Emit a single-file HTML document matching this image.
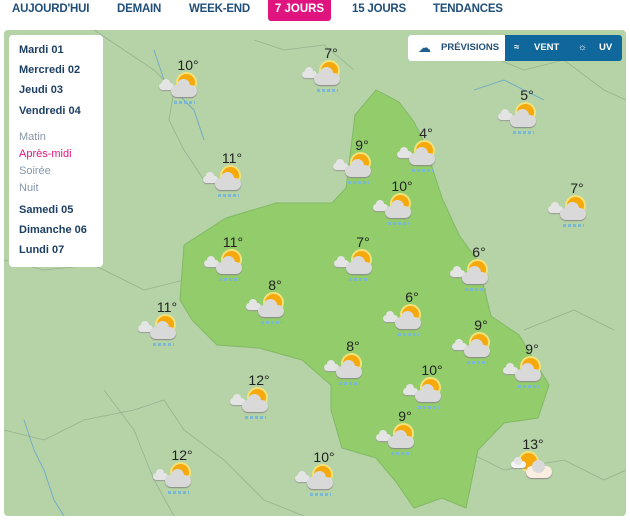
<!DOCTYPE html>
<html><head><meta charset="utf-8"><style>
*{margin:0;padding:0;box-sizing:border-box}
body{width:630px;height:520px;background:#fff;font-family:"Liberation Sans",sans-serif;position:relative;overflow:hidden}
.nav{position:absolute;top:3px;font-size:11.5px;font-weight:bold;color:#1f4e79;letter-spacing:-0.2px}
.act{position:absolute;left:268px;top:0;width:63px;height:21px;background:#e0147f;border-radius:0 0 3px 3px;color:#fff;font-size:11.5px;font-weight:bold;text-align:center;line-height:19px}
.map{position:absolute;left:4px;top:30px;width:622px;height:486px;background:#b5d3a6;border-radius:4px;overflow:hidden}
.menu{position:absolute;left:9px;top:35px;width:94px;height:232px;background:#fff;border-radius:4px}
.menu div{position:absolute;left:10px;font-size:11px;font-weight:bold;color:#1d3f63}
.menu .s{font-weight:normal;color:#8597aa}
.tog{position:absolute;left:408px;top:35px;width:214px;height:26px;border-radius:3px;overflow:hidden;background:#10679c}
.tog .w{position:absolute;left:0;top:0;width:97px;height:26px;background:#fff}
.tog span{position:absolute;top:7px;font-size:9.5px;font-weight:bold}
.i{position:absolute;width:0;height:0}
.i b{position:absolute;z-index:2;font-size:14px;font-weight:normal;color:#222;left:-15px;width:30px;text-align:center;top:-2px;line-height:14px}
.i .sun{position:absolute;left:-10px;top:14px;width:17px;height:17px;border-radius:50%;background:#f6a90d;box-shadow:0 0 0 2px #f3e27a}
.i .c{position:absolute;left:-17px;top:25px;width:26px;height:12px;border-radius:7px;background:#d9d9d9;box-shadow:0 1px 1px #888}
.i .c:before{content:"";position:absolute;left:6px;top:-6px;width:13px;height:13px;border-radius:50%;background:#d9d9d9}
.i .sc{position:absolute;left:-29px;top:23px;width:15px;height:7px;border-radius:4px;background:#e4e4e4;box-shadow:0 1px 1px #999}
.i .sc:before{content:"";position:absolute;left:3px;top:-4px;width:8px;height:8px;border-radius:50%;background:#e4e4e4}
.i .r{position:absolute;left:-14px;top:41px;width:21px;height:3px;background:repeating-linear-gradient(90deg,#7ab8d6 0 3px,transparent 3px 5px)}
</style></head><body>
<div class="nav" style="left:12px">AUJOURD'HUI</div>
<div class="nav" style="left:117px">DEMAIN</div>
<div class="nav" style="left:189px">WEEK-END</div>
<div class="act">7 JOURS</div>
<div class="nav" style="left:352px">15 JOURS</div>
<div class="nav" style="left:433px">TENDANCES</div>
<div class="map">
<svg width="622" height="486" style="position:absolute;left:0;top:0">
<g fill="none" stroke="#8fa98a" stroke-width="0.8" opacity="0.8">
<path d="M90 0 L120 20 L150 40 L170 60 L165 90 L180 120 L200 150"/>
<path d="M250 10 L280 20 L320 15 L350 40"/>
<path d="M0 230 L40 240 L90 235 L140 260 L180 250"/>
<path d="M0 400 L40 410 L80 390 L130 380 L160 370 L180 400 L220 430 L260 470 L300 486"/>
<path d="M100 360 L130 400 L150 450 L170 486"/>
<path d="M460 420 L500 440 L560 430 L600 450 L622 440"/>
<path d="M470 20 L520 40 L560 30 L600 60 L622 70"/>
<path d="M520 300 L570 280 L610 300"/>
</g>
<g fill="none" stroke="#6ea8c8" stroke-width="0.9">
<path d="M20 390 L30 420 L40 440 L50 470 L60 486"/>
<path d="M150 20 L160 50 L190 80 L200 110"/>
<path d="M470 60 L500 50 L540 70"/>
</g>
<path d="M351 85 L372 60 L395 72 L410 92 L420 112 L438 168 L455 205 L473 230 L487 286 L515 305 L545 355 L534 388 L500 393 L474 420 L462 478 L438 468 L410 478 L392 452 L372 428 L338 418 L327 380 L327 355 L298 330 L255 318 L213 315 L188 290 L176 270 L180 215 L222 188 L272 173 L328 173 L342 158 L348 110 Z" fill="#93cd6b" stroke="#82b865" stroke-width="1"/>
</svg>
</div>
<div class="menu">
<div style="top:9px">Mardi 01</div>
<div style="top:29px">Mercredi 02</div>
<div style="top:49px">Jeudi 03</div>
<div style="top:70px">Vendredi 04</div>
<div class="s" style="top:96px">Matin</div>
<div style="top:113px;color:#e0147f;font-weight:normal">Après-midi</div>
<div class="s" style="top:130px">Soirée</div>
<div class="s" style="top:147px">Nuit</div>
<div style="top:169px">Samedi 05</div>
<div style="top:189px">Dimanche 06</div>
<div style="top:209px">Lundi 07</div>
</div>
<div class="tog"><div class="w"></div>
<span style="left:10px;top:5px;color:#1f5f8e;font-size:13px;font-weight:normal">☁</span>
<span style="left:33px;color:#1f4e79">PRÉVISIONS</span>
<span style="left:106px;color:#fff">≈</span>
<span style="left:126px;color:#fff">VENT</span>
<span style="left:170px;color:#fff">☼</span>
<span style="left:191px;color:#fff">UV</span>
</div>

<div class="i" style="left:188px;top:60px"><b>10°</b><div class="sun"></div><div class="sc"></div><div class="c"></div><div class="r"></div></div>
<div class="i" style="left:331px;top:48px"><b>7°</b><div class="sun"></div><div class="sc"></div><div class="c"></div><div class="r"></div></div>
<div class="i" style="left:527px;top:90px"><b>5°</b><div class="sun"></div><div class="sc"></div><div class="c"></div><div class="r"></div></div>
<div class="i" style="left:426px;top:128px"><b>4°</b><div class="sun"></div><div class="sc"></div><div class="c"></div><div class="r"></div></div>
<div class="i" style="left:362px;top:140px"><b>9°</b><div class="sun"></div><div class="sc"></div><div class="c"></div><div class="r"></div></div>
<div class="i" style="left:232px;top:153px"><b>11°</b><div class="sun"></div><div class="sc"></div><div class="c"></div><div class="r"></div></div>
<div class="i" style="left:402px;top:181px"><b>10°</b><div class="sun"></div><div class="sc"></div><div class="c"></div><div class="r"></div></div>
<div class="i" style="left:577px;top:183px"><b>7°</b><div class="sun"></div><div class="sc"></div><div class="c"></div><div class="r"></div></div>
<div class="i" style="left:233px;top:237px"><b>11°</b><div class="sun"></div><div class="sc"></div><div class="c"></div><div class="r"></div></div>
<div class="i" style="left:363px;top:237px"><b>7°</b><div class="sun"></div><div class="sc"></div><div class="c"></div><div class="r"></div></div>
<div class="i" style="left:479px;top:247px"><b>6°</b><div class="sun"></div><div class="sc"></div><div class="c"></div><div class="r"></div></div>
<div class="i" style="left:275px;top:280px"><b>8°</b><div class="sun"></div><div class="sc"></div><div class="c"></div><div class="r"></div></div>
<div class="i" style="left:412px;top:292px"><b>6°</b><div class="sun"></div><div class="sc"></div><div class="c"></div><div class="r"></div></div>
<div class="i" style="left:167px;top:302px"><b>11°</b><div class="sun"></div><div class="sc"></div><div class="c"></div><div class="r"></div></div>
<div class="i" style="left:481px;top:320px"><b>9°</b><div class="sun"></div><div class="sc"></div><div class="c"></div><div class="r"></div></div>
<div class="i" style="left:532px;top:344px"><b>9°</b><div class="sun"></div><div class="sc"></div><div class="c"></div><div class="r"></div></div>
<div class="i" style="left:353px;top:341px"><b>8°</b><div class="sun"></div><div class="sc"></div><div class="c"></div><div class="r"></div></div>
<div class="i" style="left:432px;top:365px"><b>10°</b><div class="sun"></div><div class="sc"></div><div class="c"></div><div class="r"></div></div>
<div class="i" style="left:259px;top:375px"><b>12°</b><div class="sun"></div><div class="sc"></div><div class="c"></div><div class="r"></div></div>
<div class="i" style="left:405px;top:411px"><b>9°</b><div class="sun"></div><div class="sc"></div><div class="c"></div><div class="r"></div></div>
<div class="i" style="left:533px;top:439px"><b>13°</b><div class="sun" style="left:-13px"></div><div class="sc" style="left:-22px;top:22px;background:#f4f4f4"></div><div class="c" style="left:-7px;top:27px;background:#fbeee0"></div></div>
<div class="i" style="left:182px;top:450px"><b>12°</b><div class="sun"></div><div class="sc"></div><div class="c"></div><div class="r"></div></div>
<div class="i" style="left:324px;top:452px"><b>10°</b><div class="sun"></div><div class="sc"></div><div class="c"></div><div class="r"></div></div>
</body></html>
